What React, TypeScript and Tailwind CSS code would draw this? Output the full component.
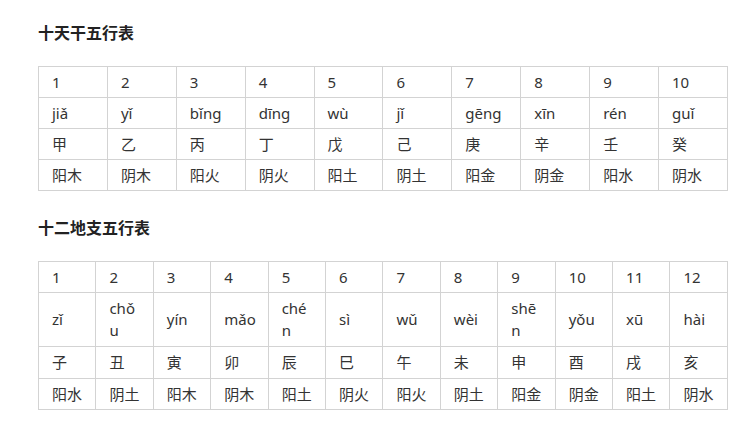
const tianGan = {
  nums: ['1', '2', '3', '4', '5', '6', '7', '8', '9', '10'],
  pinyin: [['jiǎ'], ['yǐ'], ['bǐng'], ['dīng'], ['wù'], ['jǐ'], ['gēng'], ['xīn'], ['rén'], ['guǐ']],
  chars: ['甲', '乙', '丙', '丁', '戊', '己', '庚', '辛', '壬', '癸'],
  wuxing: ['阳木', '阴木', '阳火', '阴火', '阳土', '阴土', '阳金', '阴金', '阳水', '阴水'],
}

const diZhi = {
  nums: ['1', '2', '3', '4', '5', '6', '7', '8', '9', '10', '11', '12'],
  // 窄列里原页面把长拼音折成两行
  pinyin: [['zǐ'], ['chǒ', 'u'], ['yín'], ['mǎo'], ['ché', 'n'], ['sì'], ['wǔ'], ['wèi'], ['shē', 'n'], ['yǒu'], ['xū'], ['hài']],
  chars: ['子', '丑', '寅', '卯', '辰', '巳', '午', '未', '申', '酉', '戌', '亥'],
  wuxing: ['阳水', '阴土', '阳木', '阴木', '阳土', '阴火', '阳火', '阴土', '阳金', '阴金', '阳土', '阴水'],
}

const cell = 'border border-[#d3d3d3] pl-[13px] pr-1 py-1 leading-[22px] whitespace-nowrap align-middle'

function WuxingTable({ data }: { data: typeof tianGan }) {
  const wrapped = data.pinyin.some(p => p.length > 1)
  return (
    <table className="w-[690px] table-fixed border-collapse text-[15px] text-[#333]">
      <tbody>
        <tr>
          {data.nums.map(n => (
            <td key={n} className={cell}>{n}</td>
          ))}
        </tr>
        <tr>
          {data.pinyin.map((lines, i) => (
            <td key={i} className={wrapped ? cell + ' pb-[5px]' : cell}>
              {lines.map((l, j) => (
                <div key={j}>{l}</div>
              ))}
            </td>
          ))}
        </tr>
        <tr>
          {data.chars.map(c => (
            <td key={c} className={wrapped ? cell + ' pb-[5px]' : cell}>{c}</td>
          ))}
        </tr>
        <tr>
          {data.wuxing.map((w, i) => (
            <td key={i} className={cell}>{w}</td>
          ))}
        </tr>
      </tbody>
    </table>
  )
}

export default function App() {
  return (
    <div
      className="w-[742px] h-[421px] bg-white pl-[38px] pt-[21px] overflow-hidden"
      style={{ fontFamily: '"Noto Sans", "Noto Sans CJK SC", sans-serif' }}
    >
      <h2 className="text-[16px] font-bold leading-6 text-[#222]">十天干五行表</h2>
      <div className="mt-[21px]">
        <WuxingTable data={tianGan} />
      </div>
      <h2 className="mt-[25px] text-[16px] font-bold leading-6 text-[#222]">十二地支五行表</h2>
      <div className="mt-[21px]">
        <WuxingTable data={diZhi} />
      </div>
    </div>
  )
}
